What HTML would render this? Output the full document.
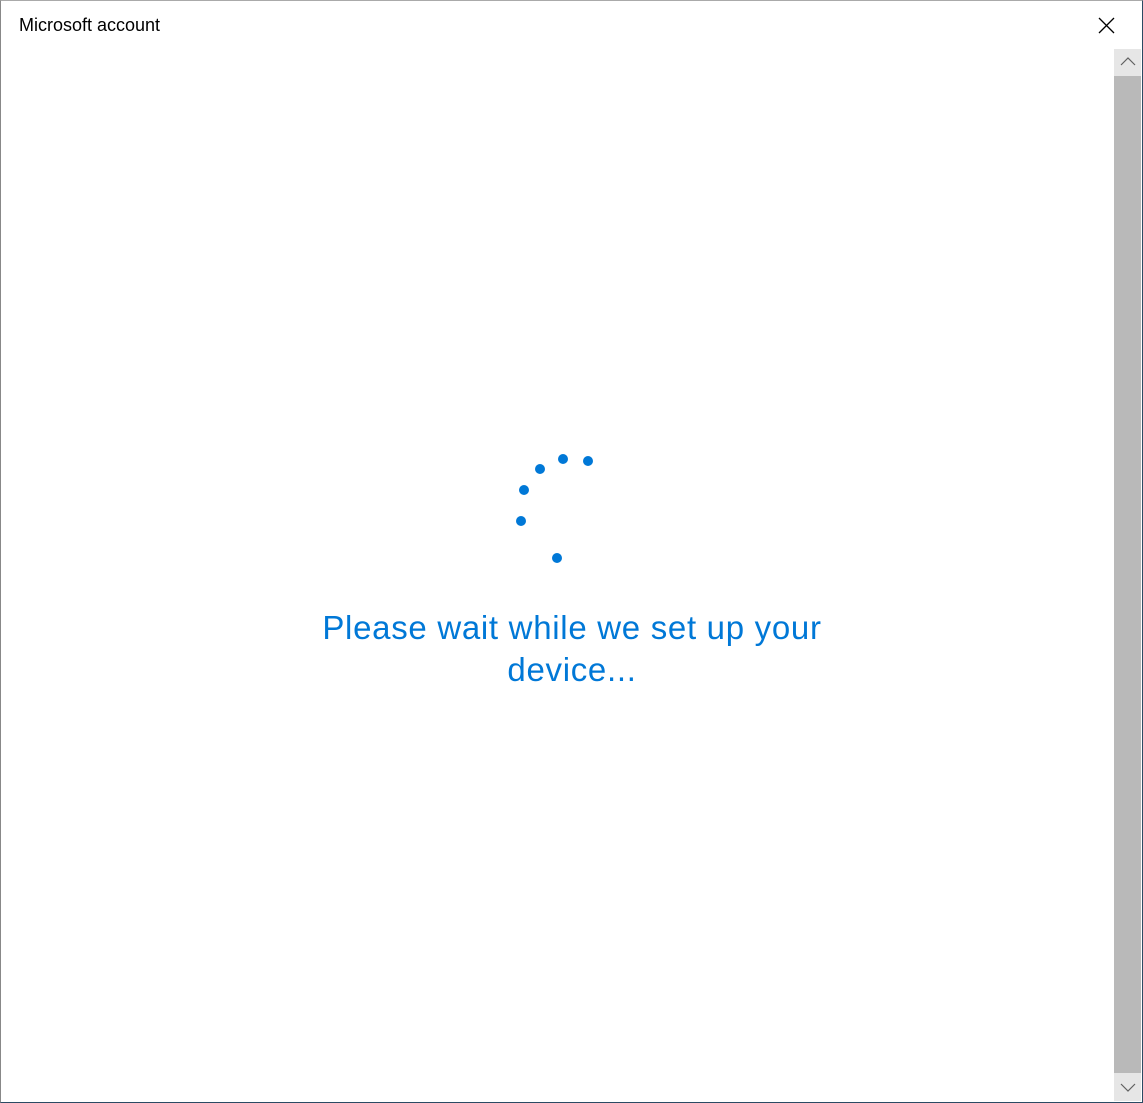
<!DOCTYPE html>
<html><head><style>
html,body{margin:0;padding:0;width:1143px;height:1103px;overflow:hidden;background:#fff;font-family:"Liberation Sans",sans-serif;}
.frame{position:absolute;left:0;top:0;width:1141px;height:1101px;border:1px solid #2b4a63;border-left-color:#888;border-top-color:#aaa;}
.title{position:absolute;left:19px;top:15px;font-size:18px;color:#000;}
.sb{position:absolute;left:1114px;top:49px;width:27px;height:1052px;background:#e6e6e6;}
.thumb{position:absolute;left:0;top:27px;width:27px;height:997px;background:#b9b9b9;}
.msg{position:absolute;left:272px;width:600px;top:607px;text-align:center;color:#0078d7;font-size:33px;line-height:42px;letter-spacing:0.7px;}
</style></head><body>
<div class="frame"></div>
<div class="title">Microsoft account</div>
<svg style="position:absolute;left:1098px;top:17px" width="17" height="17"><path d="M1 1L16 16M16 1L1 16" stroke="#000" stroke-width="1.3"/></svg>
<div class="sb"><div class="thumb"></div>
<svg style="position:absolute;left:6px;top:8px" width="16" height="10"><path d="M1 8L8 1L15 8" fill="none" stroke="#606060" stroke-width="1.2"/></svg>
<svg style="position:absolute;left:6px;top:1034px" width="16" height="10"><path d="M1 1L8 8L15 1" fill="none" stroke="#606060" stroke-width="1.2"/></svg>
</div>
<svg style="position:absolute;left:0;top:0" width="1143" height="1103">
<g fill="#0078d7"><circle cx="563" cy="459" r="5"/><circle cx="588" cy="461" r="5"/><circle cx="540" cy="469" r="5"/><circle cx="524" cy="490" r="5"/><circle cx="521" cy="521" r="5"/><circle cx="557" cy="558" r="5"/></g>
</svg>
<div class="msg">Please wait while we set up your<br>device...</div>
</body></html>
